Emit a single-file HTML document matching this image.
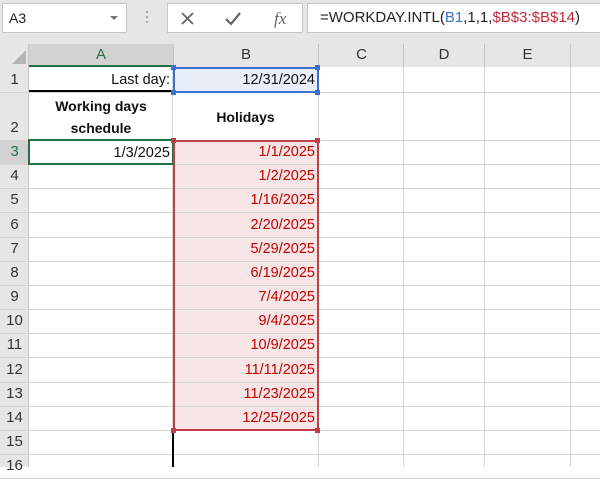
<!DOCTYPE html><html><head><style>
body{margin:0;width:600px;height:467px;overflow:hidden;background:#fff;font-family:"Liberation Sans",sans-serif;position:relative}
div{position:absolute;box-sizing:border-box}
.t{font-size:14.5px;line-height:24px;white-space:nowrap}
.h{background:#e6e6e6;color:#333;font-size:15px;text-align:center}
</style></head><body>
<div style="left:0;top:0;width:600px;height:44px;background:#e6e6e6"></div>
<div style="left:2px;top:3px;width:125px;height:30px;background:#fff;border:1px solid #c6c6c6"></div>
<div class="t" style="left:9px;top:6px;font-size:14px;color:#222">A3</div>
<div style="left:110px;top:16px;width:0;height:0;border-left:4px solid transparent;border-right:4px solid transparent;border-top:4px solid #777"></div>
<div style="left:146px;top:11px;width:2px;height:2px;background:#aaa;box-shadow:0 5px #aaa,0 10px #aaa"></div>
<div style="left:167px;top:3px;width:136px;height:30px;background:#fff;border:1px solid #c6c6c6"></div>
<svg style="position:absolute;left:180px;top:10px" width="110" height="18"><path d="M2 3l11 11M13 3L2 14" stroke="#666" stroke-width="1.8" fill="none"/><path d="M46 9l5 5 9-11" stroke="#666" stroke-width="2.2" fill="none"/><text x="94" y="14" font-family="Liberation Serif" font-style="italic" font-size="17" fill="#666">fx</text></svg>
<div style="left:307px;top:3px;width:300px;height:30px;background:#fff;border:1px solid #c6c6c6"></div>
<div class="t" style="left:320px;top:6px;font-size:15px;color:#222">=WORKDAY.INTL(<span style="color:#3b6fd0">B1</span>,1,1,<span style="color:#c0283a">$B$3:$B$14</span>)</div>
<div class="h" style="left:0;top:44px;width:600px;height:23px;border-bottom:1px solid #c6c6c6"></div>
<div style="left:0;top:44px;width:29px;height:23px;background:#e6e6e6;border-right:1px solid #c6c6c6"></div>
<div style="left:12px;top:50px;width:0;height:0;border-left:14px solid transparent;border-bottom:14px solid #b5b5b5"></div>
<div class="h" style="left:29px;top:44px;width:144px;height:23px;background:#d2d2d2;border-bottom:2px solid #217346;color:#217346;line-height:22px">A</div>
<div class="h" style="left:173px;top:44px;width:145px;height:23px;line-height:22px;border-left:1px solid #c6c6c6">B</div>
<div class="h" style="left:318px;top:44px;width:86px;height:23px;line-height:22px;border-left:1px solid #c6c6c6">C</div>
<div class="h" style="left:403px;top:44px;width:81px;height:23px;line-height:22px;border-left:1px solid #c6c6c6">D</div>
<div class="h" style="left:484px;top:44px;width:86px;height:23px;line-height:22px;border-left:1px solid #c6c6c6">E</div>
<div class="h" style="left:570px;top:44px;width:30px;height:23px;border-left:1px solid #c6c6c6"></div>
<div style="left:0;top:67px;width:29px;height:400px;background:#e6e6e6;border-right:1px solid #c6c6c6"></div>
<div style="left:172px;top:67px;width:1px;height:400px;background:#d4d4d4"></div>
<div style="left:318px;top:67px;width:1px;height:400px;background:#d4d4d4"></div>
<div style="left:403px;top:67px;width:1px;height:400px;background:#d4d4d4"></div>
<div style="left:484px;top:67px;width:1px;height:400px;background:#d4d4d4"></div>
<div style="left:570px;top:67px;width:1px;height:400px;background:#d4d4d4"></div>
<div style="left:173px;top:68px;width:145px;height:24px;background:#e9eef8"></div>
<div style="left:173px;top:141px;width:145px;height:289px;background:#f8e6e7"></div>
<div id="rows"></div>
<script>
var tops=[67,92,140],i;for(i=3;i<=16;i++)tops.push(Math.round(140+(i-2)*24.15));
var h='',B=['12/31/2024','','1/1/2025','1/2/2025','1/16/2025','2/20/2025','5/29/2025','6/19/2025','7/4/2025','9/4/2025','10/9/2025','11/11/2025','11/23/2025','12/25/2025'];
for(i=0;i<16;i++){var t=tops[i],b=tops[i+1];
h+='<div style="left:0;top:'+b+'px;width:600px;height:1px;background:#d4d4d4"></div>';
h+='<div style="left:0;top:'+(b-24)+'px;width:29px;height:24px;font-size:15px;line-height:24px;text-align:center;'+(i==2?'background:#d2d2d2;color:#217346;':'color:#333;')+'">'+(i+1)+'</div>';
if(i<14&&B[i])h+='<div class="t" style="left:173px;top:'+(b-24)+'px;width:142px;text-align:right;color:'+(i?'#c00000':'#111')+'">'+B[i]+'</div>';}
document.getElementById('rows').outerHTML=h;
</script>
<div class="t" style="left:29px;top:68px;width:141px;text-align:right;color:#111">Last day:</div>
<div style="left:29px;top:90px;width:144px;height:2px;background:#000"></div>
<div class="t" style="left:29px;top:95px;width:144px;text-align:center;font-weight:bold;font-size:14px;line-height:22px;color:#111">Working days<br>schedule</div>
<div class="t" style="left:173px;top:105px;width:145px;text-align:center;font-weight:bold;font-size:14px;color:#111">Holidays</div>
<div class="t" style="left:29px;top:141px;width:141px;text-align:right;color:#111">1/3/2025</div>
<div style="left:28px;top:139px;width:146px;height:26px;border:2px solid #217346"></div>
<div style="left:173px;top:67px;width:146px;height:26px;border:2px solid #3b6fd0"></div>
<div style="left:171px;top:65px;width:5px;height:5px;background:#3b6fd0"></div><div style="left:315px;top:65px;width:5px;height:5px;background:#3b6fd0"></div>
<div style="left:171px;top:90px;width:5px;height:5px;background:#3b6fd0"></div><div style="left:315px;top:90px;width:5px;height:5px;background:#3b6fd0"></div>
<div style="left:173px;top:140px;width:146px;height:291px;border:2px solid #c0404a"></div>
<div style="left:171px;top:138px;width:5px;height:5px;background:#c0404a"></div><div style="left:315px;top:138px;width:5px;height:5px;background:#c0404a"></div>
<div style="left:171px;top:428px;width:5px;height:5px;background:#c0404a"></div><div style="left:315px;top:428px;width:5px;height:5px;background:#c0404a"></div>
<div style="left:172px;top:433px;width:2px;height:34px;background:#000"></div>
</body></html>
